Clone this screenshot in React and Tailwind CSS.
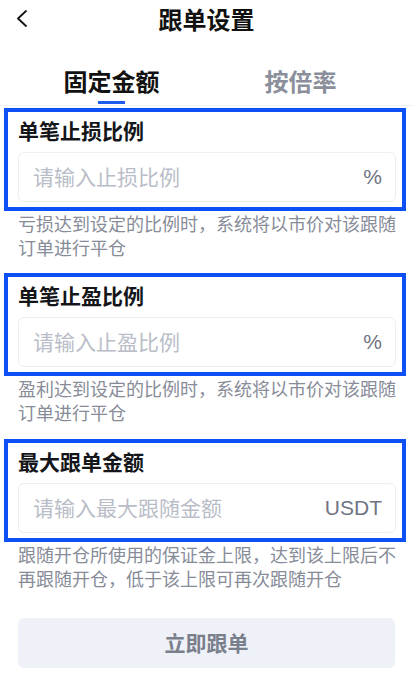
import React from "react";

const font = { fontFamily: '"Noto Sans CJK SC", "Noto Sans", sans-serif' };

const sections = [
  {
    label: "单笔止损比例",
    placeholder: "请输入止损比例",
    suffix: "%",
    help: ["亏损达到设定的比例时，系统将以市价对该跟随", "订单进行平仓"],
    gap: "mt-[14px]",
  },
  {
    label: "单笔止盈比例",
    placeholder: "请输入止盈比例",
    suffix: "%",
    help: ["盈利达到设定的比例时，系统将以市价对该跟随", "订单进行平仓"],
    gap: "mt-[15px]",
  },
  {
    label: "最大跟单金额",
    placeholder: "请输入最大跟随金额",
    suffix: "USDT",
    help: ["跟随开仓所使用的保证金上限，达到该上限后不", "再跟随开仓，低于该上限可再次跟随开仓"],
    gap: "mt-[28px]",
  },
];

const Field = ({ item, first }) => (
  <div className={first ? "" : item.gapBefore}>
    {/* highlighted block */}
    <div className="mx-[4px] mr-[7px] border-4 border-[#0c50f6] pl-[10px] pr-[6px] pt-[6px] pb-[5px]">
      <div className="text-[21px] leading-[24px] font-bold text-[#14161a]">{item.label}</div>
      <div className="mt-[10px] h-[50px] rounded-[6px] border border-[#eceef2] bg-white flex items-center justify-between pl-[14px] pr-[13px]">
        <span className="text-[21px] text-[#b9bdc8]">{item.placeholder}</span>
        <span
          className="text-[21px] text-[#6f7482]"
          style={{ fontFamily: '"Liberation Sans", Arial, sans-serif' }}
        >
          {item.suffix}
        </span>
      </div>
    </div>
    <div className="px-[18px] text-[18px] leading-[24px] text-[#878c98]">
      {item.help.map((line) => (
        <div key={line} className="whitespace-nowrap">
          {line}
        </div>
      ))}
    </div>
  </div>
);

export default function App() {
  return (
    <div className="w-[413px] h-[697px] bg-white overflow-hidden" style={font}>
      {/* Header */}
      <div className="relative h-[37px] flex items-center justify-center">
        <svg
          className="absolute left-[16px] top-[10px]"
          width="12"
          height="17"
          viewBox="0 0 12 17"
          fill="none"
        >
          <path d="M10 1 L2 8.5 L10 16" stroke="#111" strokeWidth="1.8" strokeLinecap="round" strokeLinejoin="round" />
        </svg>
        <span className="text-[24px] leading-[30px] font-bold text-[#111]">跟单设置</span>
      </div>

      {/* Tabs */}
      <div className="flex pl-[17px] border-b border-[#eef0f3] h-[69px]">
        <div className="w-[189px] flex flex-col items-center">
          <span className="mt-[28px] text-[24px] leading-[32px] font-bold text-[#111]">固定金额</span>
          <span className="mt-[4px] w-[27px] h-[3px] bg-[#1f5cf0]" />
        </div>
        <div className="w-[189px] flex flex-col items-center">
          <span className="mt-[28px] text-[24px] leading-[32px] font-bold text-[#8a8f9b]">按倍率</span>
        </div>
      </div>

      <div className="mt-[2px]">
        {sections.map((s, i) => (
          <div key={s.label} className={i === 0 ? "" : i === 1 ? "mt-[14px]" : "mt-[15px]"}>
            <Field item={s} first />
          </div>
        ))}
      </div>

      {/* Submit */}
      <div className="px-[18px] mt-[28px]">
        <button className="w-full h-[50px] rounded-[6px] bg-[#eef1f7] text-[21px] font-bold text-[#7a7f8c]">
          立即跟单
        </button>
      </div>
    </div>
  );
}
